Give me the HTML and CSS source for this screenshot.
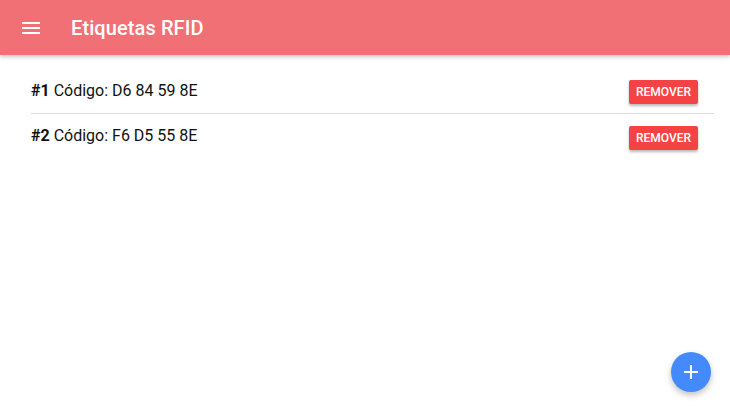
FILE: index.html
```html
<!DOCTYPE html>
<html lang="pt">
<head>
<meta charset="utf-8">
<title>Etiquetas RFID</title>
<link rel="stylesheet" href="styles.css">
</head>
<body>
<header class="toolbar">
  <button class="menu-btn" aria-label="Menu">
    <svg viewBox="0 0 24 24" width="24" height="24"><path d="M3 6h18v2H3zM3 11h18v2H3zM3 16h18v2H3z" fill="#fff"/></svg>
  </button>
  <h1 class="title">Etiquetas RFID</h1>
</header>
<main class="content">
  <ul class="tag-list">
    <li class="tag-row">
      <span class="tag-text"><b>#1</b> Código: D6 84 59 8E</span>
      <button class="remove-btn">REMOVER</button>
    </li>
    <li class="tag-row">
      <span class="tag-text"><b>#2</b> Código: F6 D5 55 8E</span>
      <button class="remove-btn">REMOVER</button>
    </li>
  </ul>
</main>
<button class="fab" aria-label="Adicionar">
  <svg viewBox="0 0 24 24" width="24" height="24"><path d="M19 13h-6v6h-2v-6H5v-2h6V5h2v6h6v2z" fill="#fff"/></svg>
</button>
</body>
</html>
```
FILE: styles.css
```css
* { box-sizing: border-box; }
html, body { margin: 0; padding: 0; background: #fff; }
body {
  font-family: Roboto, "Noto Sans", sans-serif;
  color: #212121;
  width: 730px;
  height: 409px;
  overflow: hidden;
  position: relative;
}
.toolbar {
  height: 55px;
  background: #f07075;
  display: flex;
  align-items: center;
  padding-left: 19px;
  box-shadow: 0 2px 4px rgba(0,0,0,0.22);
  position: relative;
  z-index: 2;
}
.menu-btn {
  border: 0;
  background: none;
  padding: 0;
  width: 24px;
  height: 24px;
  display: flex;
}
.title {
  margin: 0 0 0 28px;
  font-size: 20px;
  font-weight: 500;
  color: #fff;
  letter-spacing: 0.1px;
}
.content {
  padding: 14px 16px 0 31px;
}
.tag-list {
  list-style: none;
  margin: 0;
  padding: 0;
}
.tag-row {
  height: 45px;
  display: flex;
  align-items: center;
  justify-content: space-between;
  padding-right: 16px;
  border-bottom: 1px solid #dcdcdc;
}
.tag-row:last-child { border-bottom: 0; }
.tag-text {
  font-size: 16px;
  color: #111;
  margin-top: -2px;
}
.tag-text b { font-weight: 700; }
.remove-btn {
  border: 0;
  background: #f44245;
  color: #fff;
  font-family: Roboto, sans-serif;
  font-size: 12px;
  font-weight: 500;
  height: 24px;
  width: 69px;
  padding: 0;
  border-radius: 2px;
  box-shadow: 0 2px 3px rgba(0,0,0,0.28);
  margin-top: 2px;
}
.fab {
  position: absolute;
  left: 671px;
  top: 352px;
  width: 40px;
  height: 40px;
  border-radius: 50%;
  border: 0;
  padding: 0;
  background: #448aff;
  display: flex;
  align-items: center;
  justify-content: center;
  box-shadow: 0 3px 6px rgba(0,0,0,0.25);
}
```
